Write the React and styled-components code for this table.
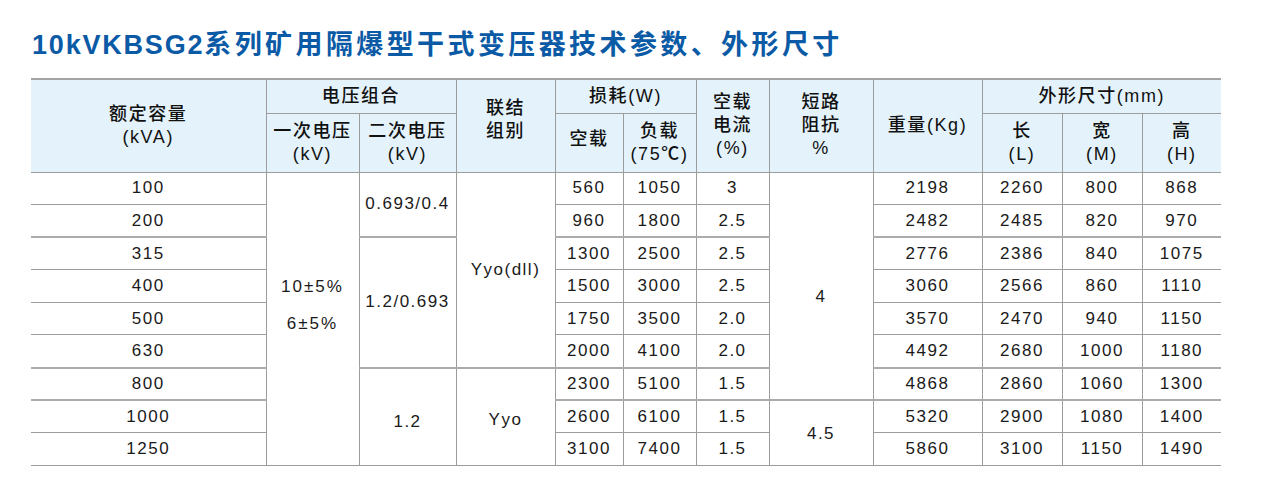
import React from 'react';
import styled, { createGlobalStyle } from 'styled-components';

const GlobalStyle = createGlobalStyle`
  html, body {
    margin: 0;
    padding: 0;
    background: #fff;
  }
  body {
    font-family: "Liberation Sans", "Noto Sans CJK SC", sans-serif;
    color: #1a1a1a;
  }
`;

const Page = styled.div`
  padding: 28px 0 0 31px;
  width: 1190px;
`;

const Title = styled.h1`
  margin: 0 0 16px 1px;
  font-family: "Liberation Sans", "Noto Sans CJK SC", sans-serif;
  font-size: 27px;
  line-height: 34px;
  font-weight: bold;
  color: #0b5aa6;
  letter-spacing: 1.8px;
  white-space: nowrap;
`;

const TitleCjk = styled.span`
  letter-spacing: 3.4px;
`;

const Table = styled.table`
  border-collapse: collapse;
  table-layout: fixed;
  width: 1190px;
  border-top: 2px solid #a3a3a3;
  border-left: hidden;
  border-right: hidden;
`;

const HeadRow = styled.tr`
  height: ${p => p.$h}px;
`;

const Th = styled.th`
  background: #e4f3fb;
  border: 1px solid #9c9c9c;
  font-size: 18px;
  line-height: 23px;
  font-weight: 500;
  letter-spacing: 1.6px;
  text-align: center;
  vertical-align: middle;
  padding: ${p => (p.$lift ? `0 0 ${p.$lift}px` : '0')};
  color: #111;
`;

const BodyRow = styled.tr`
  height: 32.6px;
`;

const Td = styled.td`
  border: 1px solid #9c9c9c;
  border-top: ${p => (p.$thick ? '2px solid #ababab' : '1px solid #9c9c9c')};
  font-size: 17px;
  line-height: 20px;
  letter-spacing: 1.5px;
  text-align: center;
  vertical-align: middle;
  padding: ${p => p.$pad || '0'};
`;

const Stack = styled.div`
  display: flex;
  flex-direction: column;
  align-items: center;
  gap: 17px;
  letter-spacing: 2px;
`;

const widths = [235, 93, 97, 99, 68, 73, 73, 104, 109, 80, 80, 79];

const rows = [
  ['100', '560', '1050', '3', '2198', '2260', '800', '868'],
  ['200', '960', '1800', '2.5', '2482', '2485', '820', '970'],
  ['315', '1300', '2500', '2.5', '2776', '2386', '840', '1075'],
  ['400', '1500', '3000', '2.5', '3060', '2566', '860', '1110'],
  ['500', '1750', '3500', '2.0', '3570', '2470', '940', '1150'],
  ['630', '2000', '4100', '2.0', '4492', '2680', '1000', '1180'],
  ['800', '2300', '5100', '1.5', '4868', '2860', '1060', '1300'],
  ['1000', '2600', '6100', '1.5', '5320', '2900', '1080', '1400'],
  ['1250', '3100', '7400', '1.5', '5860', '3100', '1150', '1490'],
];

// merged cells, keyed by the row they start in
const secondary = {
  0: { text: '0.693/0.4', span: 2 },
  2: { text: '1.2/0.693', span: 4 },
  6: { text: '1.2', span: 3, pad: '10px 0 0' },
};
const group = {
  0: { text: 'Yyo(dll)', span: 6 },
  6: { text: 'Yyo', span: 3, pad: '6px 0 0' },
};
const impedance = {
  0: { text: '4', span: 7, pad: '22px 0 0' },
  7: { text: '4.5', span: 2, pad: '2px 0 0' },
};
const thickRows = [2, 6, 7];

export default function App() {
  return (
    <Page>
      <GlobalStyle />
      <Title>
        10kVKBSG2<TitleCjk>系列矿用隔爆型干式变压器技术参数、外形尺寸</TitleCjk>
      </Title>
      <Table>
        <colgroup>
          {widths.map((w, i) => (
            <col key={i} style={{ width: w }} />
          ))}
        </colgroup>
        <thead>
          <HeadRow $h={34}>
            <Th rowSpan={2}>额定容量<br />(kVA)</Th>
            <Th colSpan={2}>电压组合</Th>
            <Th rowSpan={2} $lift={12}>联结<br />组别</Th>
            <Th colSpan={2}>损耗(W)</Th>
            <Th rowSpan={2}>空载<br />电流<br />(%)</Th>
            <Th rowSpan={2}>短路<br />阻抗<br />%</Th>
            <Th rowSpan={2}>重量(Kg)</Th>
            <Th colSpan={3}>外形尺寸(mm)</Th>
          </HeadRow>
          <HeadRow $h={59}>
            <Th>一次电压<br />(kV)</Th>
            <Th>二次电压<br />(kV)</Th>
            <Th $lift={6}>空载</Th>
            <Th>负载<br />(75℃)</Th>
            <Th>长<br />(L)</Th>
            <Th>宽<br />(M)</Th>
            <Th>高<br />(H)</Th>
          </HeadRow>
        </thead>
        <tbody>
          {rows.map(([kva, noLoad, load, current, weight, l, m, h], i) => {
            const thick = thickRows.includes(i);
            return (
              <BodyRow key={kva}>
                <Td $thick={thick}>{kva}</Td>
                {i === 0 && (
                  <Td rowSpan={9} $pad="0 0 26px">
                    <Stack>
                      <span>10±5%</span>
                      <span>6±5%</span>
                    </Stack>
                  </Td>
                )}
                {secondary[i] && (
                  <Td rowSpan={secondary[i].span} $thick={thick} $pad={secondary[i].pad}>
                    {secondary[i].text}
                  </Td>
                )}
                {group[i] && (
                  <Td rowSpan={group[i].span} $thick={thick} $pad={group[i].pad}>
                    {group[i].text}
                  </Td>
                )}
                <Td $thick={thick}>{noLoad}</Td>
                <Td $thick={thick}>{load}</Td>
                <Td $thick={thick}>{current}</Td>
                {impedance[i] && (
                  <Td rowSpan={impedance[i].span} $thick={thick} $pad={impedance[i].pad}>
                    {impedance[i].text}
                  </Td>
                )}
                <Td $thick={thick}>{weight}</Td>
                <Td $thick={thick}>{l}</Td>
                <Td $thick={thick}>{m}</Td>
                <Td $thick={thick}>{h}</Td>
              </BodyRow>
            );
          })}
        </tbody>
      </Table>
    </Page>
  );
}
